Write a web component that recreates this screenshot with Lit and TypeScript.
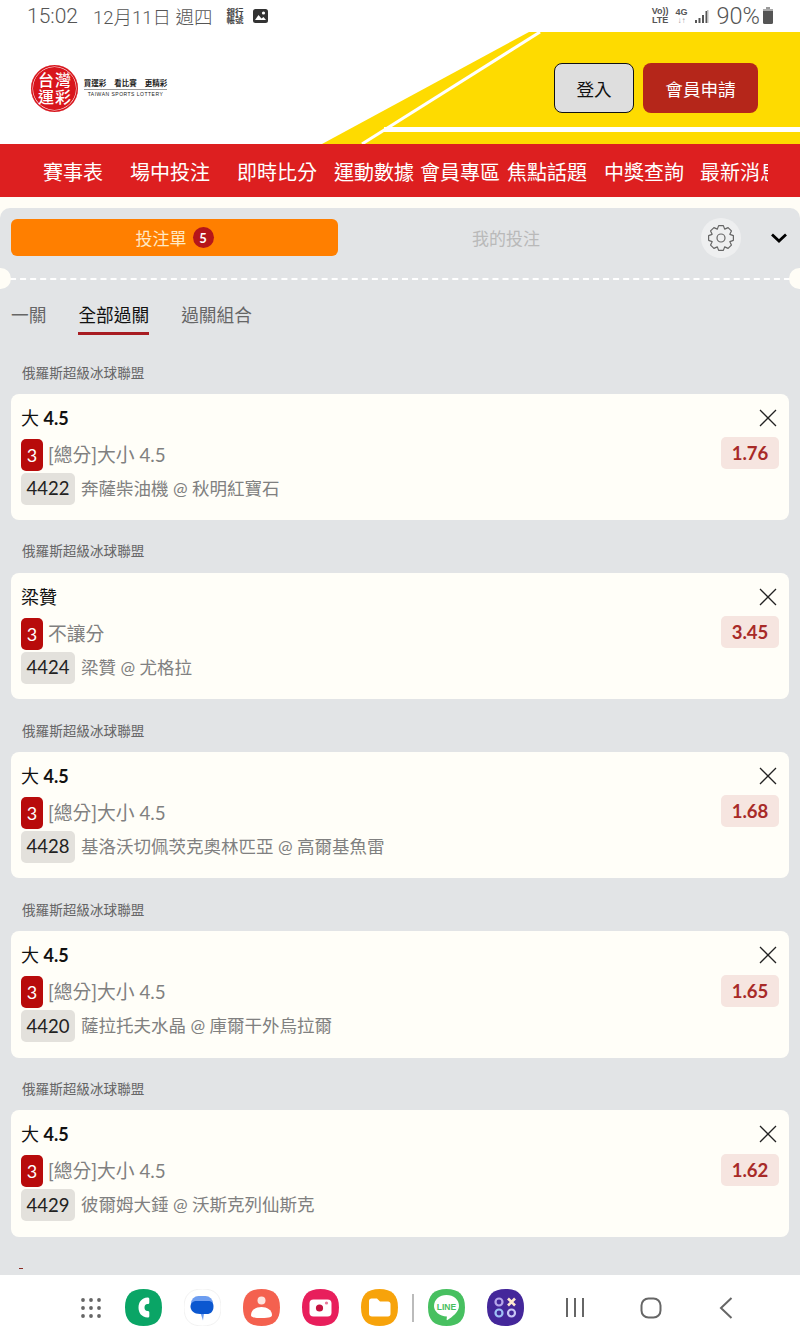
import { LitElement, html, css, svg } from "lit";
import { customElement } from "lit/decorators.js";

const SQ = "M18.5 0C31 0 37 6 37 18.5S31 37 18.5 37 0 31 0 18.5 6 0 18.5 0Z";

const NAV = [
  ["賽事表", 0], ["場中投注", 27], ["即時比分", 27], ["運動數據", 17],
  ["會員專區", 6], ["焦點話題", 7], ["中獎查詢", 17], ["最新消息", 16],
] as const;

const BETS = [
  { title: "大", num: "4.5", market: "[總分]大小 4.5", code: "4422", teams: "奔薩柴油機 @ 秋明紅寶石", odds: "1.76" },
  { title: "梁贊", num: "", market: "不讓分", code: "4424", teams: "梁贊 @ 尤格拉", odds: "3.45" },
  { title: "大", num: "4.5", market: "[總分]大小 4.5", code: "4428", teams: "基洛沃切佩茨克奧林匹亞 @ 高爾基魚雷", odds: "1.68" },
  { title: "大", num: "4.5", market: "[總分]大小 4.5", code: "4420", teams: "薩拉托夫水晶 @ 庫爾干外烏拉爾", odds: "1.65" },
  { title: "大", num: "4.5", market: "[總分]大小 4.5", code: "4429", teams: "彼爾姆大錘 @ 沃斯克列仙斯克", odds: "1.62" },
];

function gearPath(): string {
  const pts: string[] = [];
  const teeth = 8;
  for (let i = 0; i < teeth; i++) {
    const a = (i / teeth) * Math.PI * 2 - Math.PI / 2;
    const s = (Math.PI * 2) / teeth;
    const seq: [number, number][] = [
      [9.6, a - s * 0.5], [12.6, a - s * 0.24], [12.6, a + s * 0.24],
    ];
    for (const [r, t] of seq) {
      pts.push(`${(14 + r * Math.cos(t)).toFixed(2)} ${(14 + r * Math.sin(t)).toFixed(2)}`);
    }
  }
  return "M" + pts.join("L") + "Z";
}

@customElement("app-root")
export class AppRoot extends LitElement {
  static styles = css`
    :host {
      display: flex;
      flex-direction: column;
      width: 800px;
      height: 1340px;
      overflow: hidden;
      background: #fffdf6;
      font-family: Lato, "Noto Sans CJK TC", sans-serif;
      color: #222;
    }
    .status {
      height: 32px;
      flex: none;
      background: #fff;
      display: flex;
      align-items: center;
      padding: 0 26px 0 27px;
      font-family: Roboto, "Noto Sans CJK TC", sans-serif;
      font-weight: 300;
      color: #555;
      box-sizing: border-box;
    }
    .time { font-size: 21px; margin-right: 15px; }
    .date { font-size: 18.5px; }
    .sicon1 { margin-left: 14px; display: flex; flex-direction: column; font-size: 8.5px; line-height: 8.5px; font-weight: 700; width: 19px; color: #444; }
    .sicon2 { margin-left: 6px; }
    .spacer { flex: 1; }
    .net { display: flex; flex-direction: column; font-size: 9px; line-height: 9px; font-weight: 700; color: #555; text-align: center; font-family: "Liberation Sans", sans-serif; }
    .g4 { margin-left: 7px; }
    .g4 small { font-size: 8px; color: #999; font-weight: 400; display: block; line-height: 7px; }
    .sig { margin-left: 6px; }
    .pct { font-size: 23.5px; margin-left: 7px; font-weight: 300; }
    .bat { margin-left: 2px; }

    .head {
      height: 112px;
      flex: none;
      background: #fff;
      position: relative;
      display: flex;
      align-items: center;
      padding: 0 42px 0 31px;
      box-sizing: border-box;
    }
    .deco { position: absolute; inset: 0; }
    .logo { position: relative; display: flex; align-items: center; gap: 6px; }
    .seal {
      width: 47px; height: 47px; border-radius: 50%;
      background: #d8151c;
      box-shadow: inset 0 0 0 1.5px #d8151c, inset 0 0 0 2px #fff;
      display: grid; grid-template-columns: 17px 17px; grid-auto-rows: 17px;
      justify-content: center; align-content: center;
      color: #fff; font-size: 16px; line-height: 17px; text-align: center; font-weight: 500;
    }
    .slogan { width: 83px; text-align: center; color: #222; }
    .s1 { font-size: 7.5px; line-height: 9px; font-weight: 700; border-bottom: 1.5px solid #999; display: flex; justify-content: center; gap: 8px; padding-bottom: 1px; white-space: nowrap; }
    .s2 { font-size: 5px; line-height: 8px; letter-spacing: 0.5px; font-weight: 400; white-space: nowrap; font-family: "Liberation Sans", sans-serif; }
    .btns { position: relative; margin-left: auto; display: flex; gap: 9px; }
    .btn {
      height: 50px; border-radius: 8px; box-sizing: border-box;
      display: flex; align-items: center; justify-content: center;
      font-size: 17.6px;
    }
    .login { width: 80px; background: #dedede; border: 1px solid #111; color: #111; }
    .join { width: 115px; background: #b5261a; color: #fff; }

    .nav {
      height: 53px;
      flex: none;
      background: #dd1f20;
      box-sizing: border-box;
      padding: 1px 32px 0 43px;
    }
    .nav-in { display: flex; align-items: center; height: 100%; overflow: hidden; white-space: nowrap; color: #fff; font-size: 20px; }
    .nav-in span { flex: none; }

    .panel {
      margin-top: 11px;
      flex: 1;
      min-height: 0;
      background: #e2e4e6;
      border-radius: 10px 10px 0 0;
      overflow: hidden;
    }
    .top { height: 59px; margin-bottom: 11px; display: flex; align-items: center; padding: 0 11px; box-sizing: border-box; }
    .tab-on {
      width: 327px; height: 37px; background: #ff7f00; border-radius: 6px;
      display: flex; align-items: center; justify-content: center; gap: 6px;
      color: #ffe9c4; font-size: 17px; flex: none;
    }
    .count {
      width: 21px; height: 21px; border-radius: 50%; background: #b5161a; color: #fff;
      font-size: 13px; font-weight: 700; display: flex; align-items: center; justify-content: center;
    }
    .tab-off { width: 336px; text-align: center; color: #b9b9b9; font-size: 17px; flex: none; }
    .gear {
      width: 40px; height: 40px; border-radius: 50%; background: #eeeff0; flex: none; margin-left: 27px;
      display: flex; align-items: center; justify-content: center;
    }
    .chev { margin-left: 29px; flex: none; display: block; }
    .sep { position: relative; border-top: 2px dashed #fff; }
    .notch { position: absolute; top: -12px; width: 21px; height: 21px; border-radius: 50%; background: #fffdf6; }
    .notch.l { left: -10px; }
    .notch.r { right: -10px; }

    .subtabs { display: flex; gap: 32px; padding: 22px 11px 0; height: 56px; font-size: 17.7px; color: #666; box-sizing: border-box; }
    .subtab { height: 33px; box-sizing: border-box; line-height: 27px; }
    .subtab.on { color: #111; border-bottom: 3px solid #a81c22; }

    .group { padding: 0 11px; }
    .league { height: 52.6px; box-sizing: border-box; padding: 22.4px 11px 0; font-size: 13.6px; line-height: 19px; color: #666; }
    .group.first .league { height: 57.5px; padding-top: 27.5px; }
    .card {
      height: 126.6px; box-sizing: border-box;
      background: #fffef8; border-radius: 8px; padding: 14px 10px 0; display: flex; justify-content: space-between;
    }
    .info { display: flex; flex-direction: column; }
    .title { font-size: 18px; line-height: 21px; color: #111; height: 31px; }
    .title b { font-weight: 700; font-size: 18px; }
    .row { display: flex; align-items: center; gap: 5px; height: 32px; margin-bottom: 2px; color: #808080; font-size: 18.8px; white-space: nowrap; }
    .market { padding-bottom: 3px; }
    .rank { width: 22px; height: 32px; background: #b80b0b; color: #fff; border-radius: 5px; display: flex; align-items: center; justify-content: center; font-size: 18px; }
    .code { width: 54px; height: 32px; box-sizing: border-box; padding-bottom: 1px; background: #e3e1dc; color: #222; border-radius: 5px; display: flex; align-items: center; justify-content: center; font-size: 18.5px; margin-right: 1px; }
    .teams { font-size: 17.5px; padding-bottom: 3px; }
    .side { display: flex; flex-direction: column; align-items: flex-end; }
    .x { display: block; margin-right: 2px; margin-top: 1px; }
    .odds { margin-top: 10.5px; width: 58px; height: 32px; background: #f6e5e0; color: #a82a28; border-radius: 5px; font-size: 18.5px; font-weight: 700; display: flex; align-items: center; justify-content: center; }
    .stub { margin: 31px 0 0 19px; width: 4px; height: 1px; background: #8a2a22; }

    .dock {
      height: 65px; flex: none; background: #fff; display: flex; align-items: center; padding: 0 0 0 80px; box-sizing: border-box;
    }
    .dock svg { display: block; flex: none; }
    .apps { margin-right: 23px; }
    .ic { margin-right: 22px; }
    .div { width: 2px; height: 28px; background: #bbb; margin: 0 14px 0 -8px; flex: none; }
    .ln { margin-left: 41px; }
    .home { margin-left: 55px; }
    .back { margin-left: 57px; }
  `;

  private gear = gearPath();

  render() {
    return html`
      <div class="status">
        <span class="time">15:02</span>
        <span class="date">12月11日 週四</span>
        <span class="sicon1"><span>銀行</span><span>帳號</span></span>
        <svg class="sicon2" width="17" height="16" viewBox="0 0 17 16"><rect x="1" y="1" width="15" height="14" rx="2.5" fill="#333"/><circle cx="11.5" cy="5" r="1.6" fill="#fff"/><path d="M3 12l3.5-5 3 3.5 2-1.5L14 12z" fill="#fff"/></svg>
        <span class="spacer"></span>
        <span class="net"><span>Vo))</span><span>LTE</span></span>
        <span class="net g4"><span>4G</span><small>↓↑</small></span>
        <svg class="sig" width="16" height="15" viewBox="0 0 16 15"><path d="M1 11h2v3H1zM4.500 9h2v5h-2zM8 6h2v8H8zM11.500 2h2v12h-2z" fill="#555"/><path d="M13 1h1.500v13H13z" fill="#bbb"/></svg>
        <span class="pct">90%</span>
        <svg class="bat" width="12" height="18" viewBox="0 0 12 18"><path d="M4 0h4v2H4z" fill="#999"/><rect x="1" y="2" width="10" height="15" rx="1.500" fill="#555"/><rect x="1" y="2" width="10" height="2" fill="#aaa"/></svg>
      </div>

      <div class="head">
        <svg class="deco" width="800" height="112" viewBox="0 0 800 112">
          <path d="M322 112L529 0H800V112Z" fill="#fedb00"/>
          <path d="M362 112L540 0" stroke="#fff" stroke-width="3" fill="none"/>
          <path d="M384 97.500H800" stroke="#fff" stroke-width="5" fill="none"/>
        </svg>
        <div class="logo">
          <div class="seal"><span>台</span><span>灣</span><span>運</span><span>彩</span></div>
          <div class="slogan">
            <div class="s1"><span>買運彩</span><span>看比賽</span><span>更精彩</span></div>
            <div class="s2">TAIWAN SPORTS LOTTERY</div>
          </div>
        </div>
        <div class="btns">
          <div class="btn login">登入</div>
          <div class="btn join">會員申請</div>
        </div>
      </div>

      <div class="nav">
        <div class="nav-in">
          ${NAV.map(([t, m]) => html`<span style="margin-left:${m}px">${t}</span>`)}
        </div>
      </div>

      <div class="panel">
        <div class="top">
          <div class="tab-on">投注單<span class="count">5</span></div>
          <div class="tab-off">我的投注</div>
          <div class="gear">
            <svg width="28" height="28" viewBox="0 0 28 28" fill="none" stroke="#666" stroke-width="1.200" stroke-linejoin="round">
              ${svg`<path d=${this.gear}/><circle cx="14" cy="14" r="4"/>`}
            </svg>
          </div>
          <svg class="chev" width="18" height="12" viewBox="0 0 18 12"><path d="M2 2.500L9 9l7-6.500" fill="none" stroke="#000" stroke-width="2.800"/></svg>
        </div>
        <div class="sep"><span class="notch l"></span><span class="notch r"></span></div>
        <div class="subtabs">
          <div class="subtab">一關</div>
          <div class="subtab on">全部過關</div>
          <div class="subtab">過關組合</div>
        </div>
        ${BETS.map((b, i) => html`
          <div class="group ${i === 0 ? "first" : ""}">
            <div class="league">俄羅斯超級冰球聯盟</div>
            <div class="card">
              <div class="info">
                <div class="title">${b.title}${b.num ? html` <b>${b.num}</b>` : ""}</div>
                <div class="row"><span class="rank">3</span><span class="market">${b.market}</span></div>
                <div class="row"><span class="code">${b.code}</span><span class="teams">${b.teams}</span></div>
              </div>
              <div class="side">
                <svg class="x" width="18" height="18" viewBox="0 0 18 18"><path d="M1 1l16 16M17 1L1 17" stroke="#222" stroke-width="1.300" fill="none"/></svg>
                <div class="odds">${b.odds}</div>
              </div>
            </div>
          </div>`)}
        <div class="stub"></div>
      </div>

      <div class="dock">
        <svg class="apps" width="22" height="22" viewBox="0 0 22 22" fill="#666">
          ${[3, 11, 19].flatMap((y) => [3, 11, 19].map((x) => svg`<circle cx=${x} cy=${y} r="1.900"/>`))}
        </svg>
        <svg class="ic" width="37" height="37" viewBox="0 0 37 37"><path d=${SQ} fill="#0aa566"/><path d="M22.500 8.500c-6 .5-9 4.500-9 10s3 9.500 9 10c1.200 0 1.800-.5 1.800-1.500v-3.500c0-1-.6-1.500-1.800-1.500-2 0-3-1.500-3-3.500s1-3.500 3-3.500c1.200 0 1.800-.5 1.800-1.500V10c0-1-.6-1.500-1.800-1.500z" fill="#fff"/></svg>
        <svg class="ic" width="37" height="37" viewBox="0 0 37 37"><path d=${SQ} fill="#fff" stroke="#f2f2f2"/><rect x="7" y="7" width="22" height="15" rx="7.500" fill="#6d9df0"/><path d="M16.500 24l2.500 7.500 1-7.500z" fill="#6d9df0"/><path d="M13 12h11c3.500 0 5.500 1.800 5.500 5.500 0 5-3 7.500-6.500 7.500h-7C10 25 6.500 21.500 6.500 17.500 6.500 14 9 12 13 12z" fill="#0b57d0"/></svg>
        <svg class="ic" width="37" height="37" viewBox="0 0 37 37"><path d=${SQ} fill="#f4614f"/><circle cx="18.500" cy="11.500" r="4" fill="#fde4df"/><path d="M8 26c0-5 5-8 10.500-8S29 21 29 26c0 2-2 3-10.500 3S8 28 8 26z" fill="#fff"/></svg>
        <svg class="ic" width="37" height="37" viewBox="0 0 37 37"><path d=${SQ} fill="#e81f5c"/><rect x="7.500" y="10.500" width="22" height="17" rx="4" fill="#fff"/><circle cx="17.500" cy="19" r="3.600" fill="#c4123f"/><circle cx="24.500" cy="14" r="1.600" fill="#e8799a"/></svg>
        <svg class="ic" width="37" height="37" viewBox="0 0 37 37"><path d=${SQ} fill="#f7a30b"/><path d="M8 12c0-1.500 1-2.500 2.500-2.500h5.500l3 3h8c1.500 0 2.500 1 2.500 2.500v10c0 1.500-1 2.500-2.500 2.500h-16C9 27.500 8 26.500 8 25z" fill="#fff"/></svg>
        <div class="div"></div>
        <svg class="ic" width="37" height="37" viewBox="0 0 37 37"><path d=${SQ} fill="#47c060"/><path d="M18.500 6C25.500 6 31 10.500 31 17c0 6-7 11-11.500 14-.8.500-1-.3-.8-1.500l.2-2C11.500 27 6 22.500 6 17 6 10.500 11.500 6 18.500 6z" fill="#fff"/><text x="18.500" y="20.500" font-size="8.500" font-weight="700" text-anchor="middle" fill="#47c060" font-family="Liberation Sans, sans-serif">LINE</text></svg>
        <svg width="37" height="37" viewBox="0 0 37 37"><path d=${SQ} fill="#44279a"/><g fill="none" stroke-width="2.200"><circle cx="12" cy="13" r="3.500" stroke="#b6a6ea"/><circle cx="12" cy="24" r="3.500" stroke="#9ec0f5"/><circle cx="24.500" cy="24" r="3.500" stroke="#c9c6f5"/><path d="M21 9.500l7 7M28 9.500l-7 7" stroke="#fde8cf" stroke-width="2.600"/></g></svg>
        <svg class="ln" width="20" height="21" viewBox="0 0 20 21" stroke="#666" stroke-width="2" fill="none"><path d="M2 1v19M10 1v19M18 1v19"/></svg>
        <svg class="home" width="22" height="22" viewBox="0 0 22 22" fill="none"><rect x="1.500" y="1.500" width="19" height="19" rx="7" stroke="#666" stroke-width="2"/></svg>
        <svg class="back" width="14" height="22" viewBox="0 0 14 22" fill="none"><path d="M12.500 1L2 11l10.500 10" stroke="#666" stroke-width="2"/></svg>
      </div>
    `;
  }
}
